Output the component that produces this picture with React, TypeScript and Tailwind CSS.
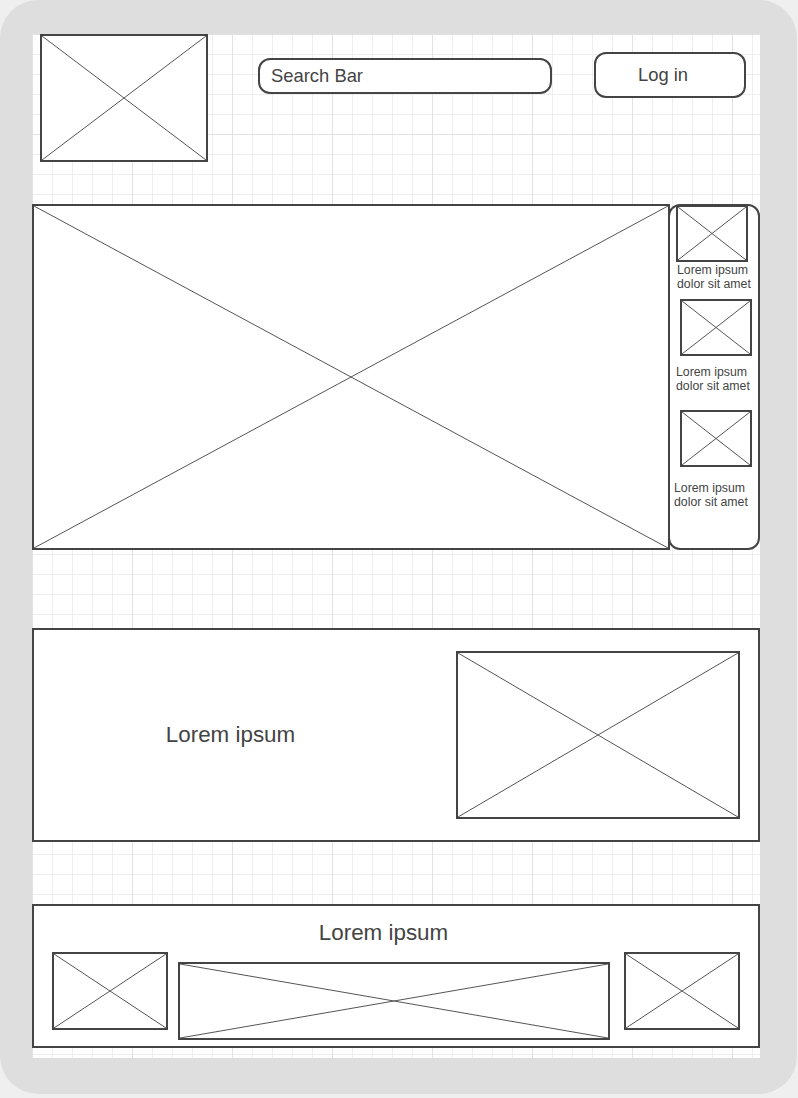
import React from "react";

function Ph({ className = "" }: { className?: string }) {
  return (
    <div className={`shrink-0 border-2 border-[#444444] bg-white ${className}`}>
      <svg className="block h-full w-full" viewBox="0 0 100 100" preserveAspectRatio="none">
        <line x1="0" y1="0" x2="100" y2="100" stroke="#555555" strokeWidth="1" vectorEffect="non-scaling-stroke" />
        <line x1="100" y1="0" x2="0" y2="100" stroke="#555555" strokeWidth="1" vectorEffect="non-scaling-stroke" />
      </svg>
    </div>
  );
}

function SideText({ className = "" }: { className?: string }) {
  return (
    <div className={`text-[12.3px] leading-[14px] text-[#444444] whitespace-nowrap ${className}`}>
      <div>Lorem ipsum</div>
      <div>dolor sit amet</div>
    </div>
  );
}

export default function App() {
  return (
    <div className="w-[798px] h-[1098px] bg-[#efefef] font-['Liberation_Sans',Arial,sans-serif]">
      <div className="w-[797px] h-[1094px] bg-[#dedede] rounded-[38px] pt-[34px] pl-[32px]">
        <div className="w-[728px] h-[1024px] bg-white bg-[image:linear-gradient(to_right,#e2e2e2_1px,transparent_1px),linear-gradient(to_bottom,#e2e2e2_1px,transparent_1px),linear-gradient(to_right,#eeeeee_1px,transparent_1px),linear-gradient(to_bottom,#eeeeee_1px,transparent_1px)] bg-size-[100px_100px,100px_100px,20px_20px,20px_20px] flex flex-col">
          {/* header */}
          <div className="flex items-start h-[128px]">
            <Ph className="ml-[8px] w-[168px] h-[128px]" />
            <div className="ml-[50px] mt-[24px] w-[294px] h-[36px] rounded-[12px] border-2 border-[#444444] bg-white flex items-center pl-[11px] text-[18.4px] text-[#444444]">
              Search Bar
            </div>
            <div className="ml-[42px] mt-[18px] w-[152px] h-[46px] rounded-[12px] border-2 border-[#444444] bg-white flex items-center justify-center pr-[14px] text-[18.4px] text-[#444444]">
              Log in
            </div>
          </div>

          {/* hero */}
          <div className="mt-[42px] flex h-[346px]">
            <Ph className="w-[638px] h-[346px]" />
            <div className="-ml-[2px] w-[92px] h-[346px] rounded-[12px] border-2 border-[#444444] bg-white flex flex-col items-start">
              <Ph className="-mt-[1px] ml-[6px] w-[72px] h-[57px]" />
              <SideText className="mt-[0.5px] ml-[7px]" />
              <Ph className="mt-[8px] ml-[10px] w-[72px] h-[57px]" />
              <SideText className="mt-[9px] ml-[6px]" />
              <Ph className="mt-[17px] ml-[10px] w-[72px] h-[57px]" />
              <SideText className="mt-[14px] ml-[4px]" />
            </div>
          </div>

          {/* middle */}
          <div className="mt-[78px] h-[214px] border-2 border-[#444444] bg-white flex items-center">
            <div className="w-[393px] text-center text-[22.4px] leading-[26px] text-[#444444]">Lorem ipsum</div>
            <Ph className="ml-auto mr-[18px] w-[284px] h-[168px]" />
          </div>

          {/* bottom */}
          <div className="mt-[62px] h-[144px] border-2 border-[#444444] bg-white flex flex-col">
            <div className="mt-[14px] w-[699px] text-center text-[22.4px] leading-[26px] text-[#444444]">Lorem ipsum</div>
            <div className="mt-[6px] flex items-start">
              <Ph className="ml-[18px] w-[116px] h-[78px]" />
              <Ph className="ml-[10px] mt-[10px] w-[432px] h-[78px]" />
              <Ph className="ml-[14px] w-[116px] h-[78px]" />
            </div>
          </div>
        </div>
      </div>
    </div>
  );
}
